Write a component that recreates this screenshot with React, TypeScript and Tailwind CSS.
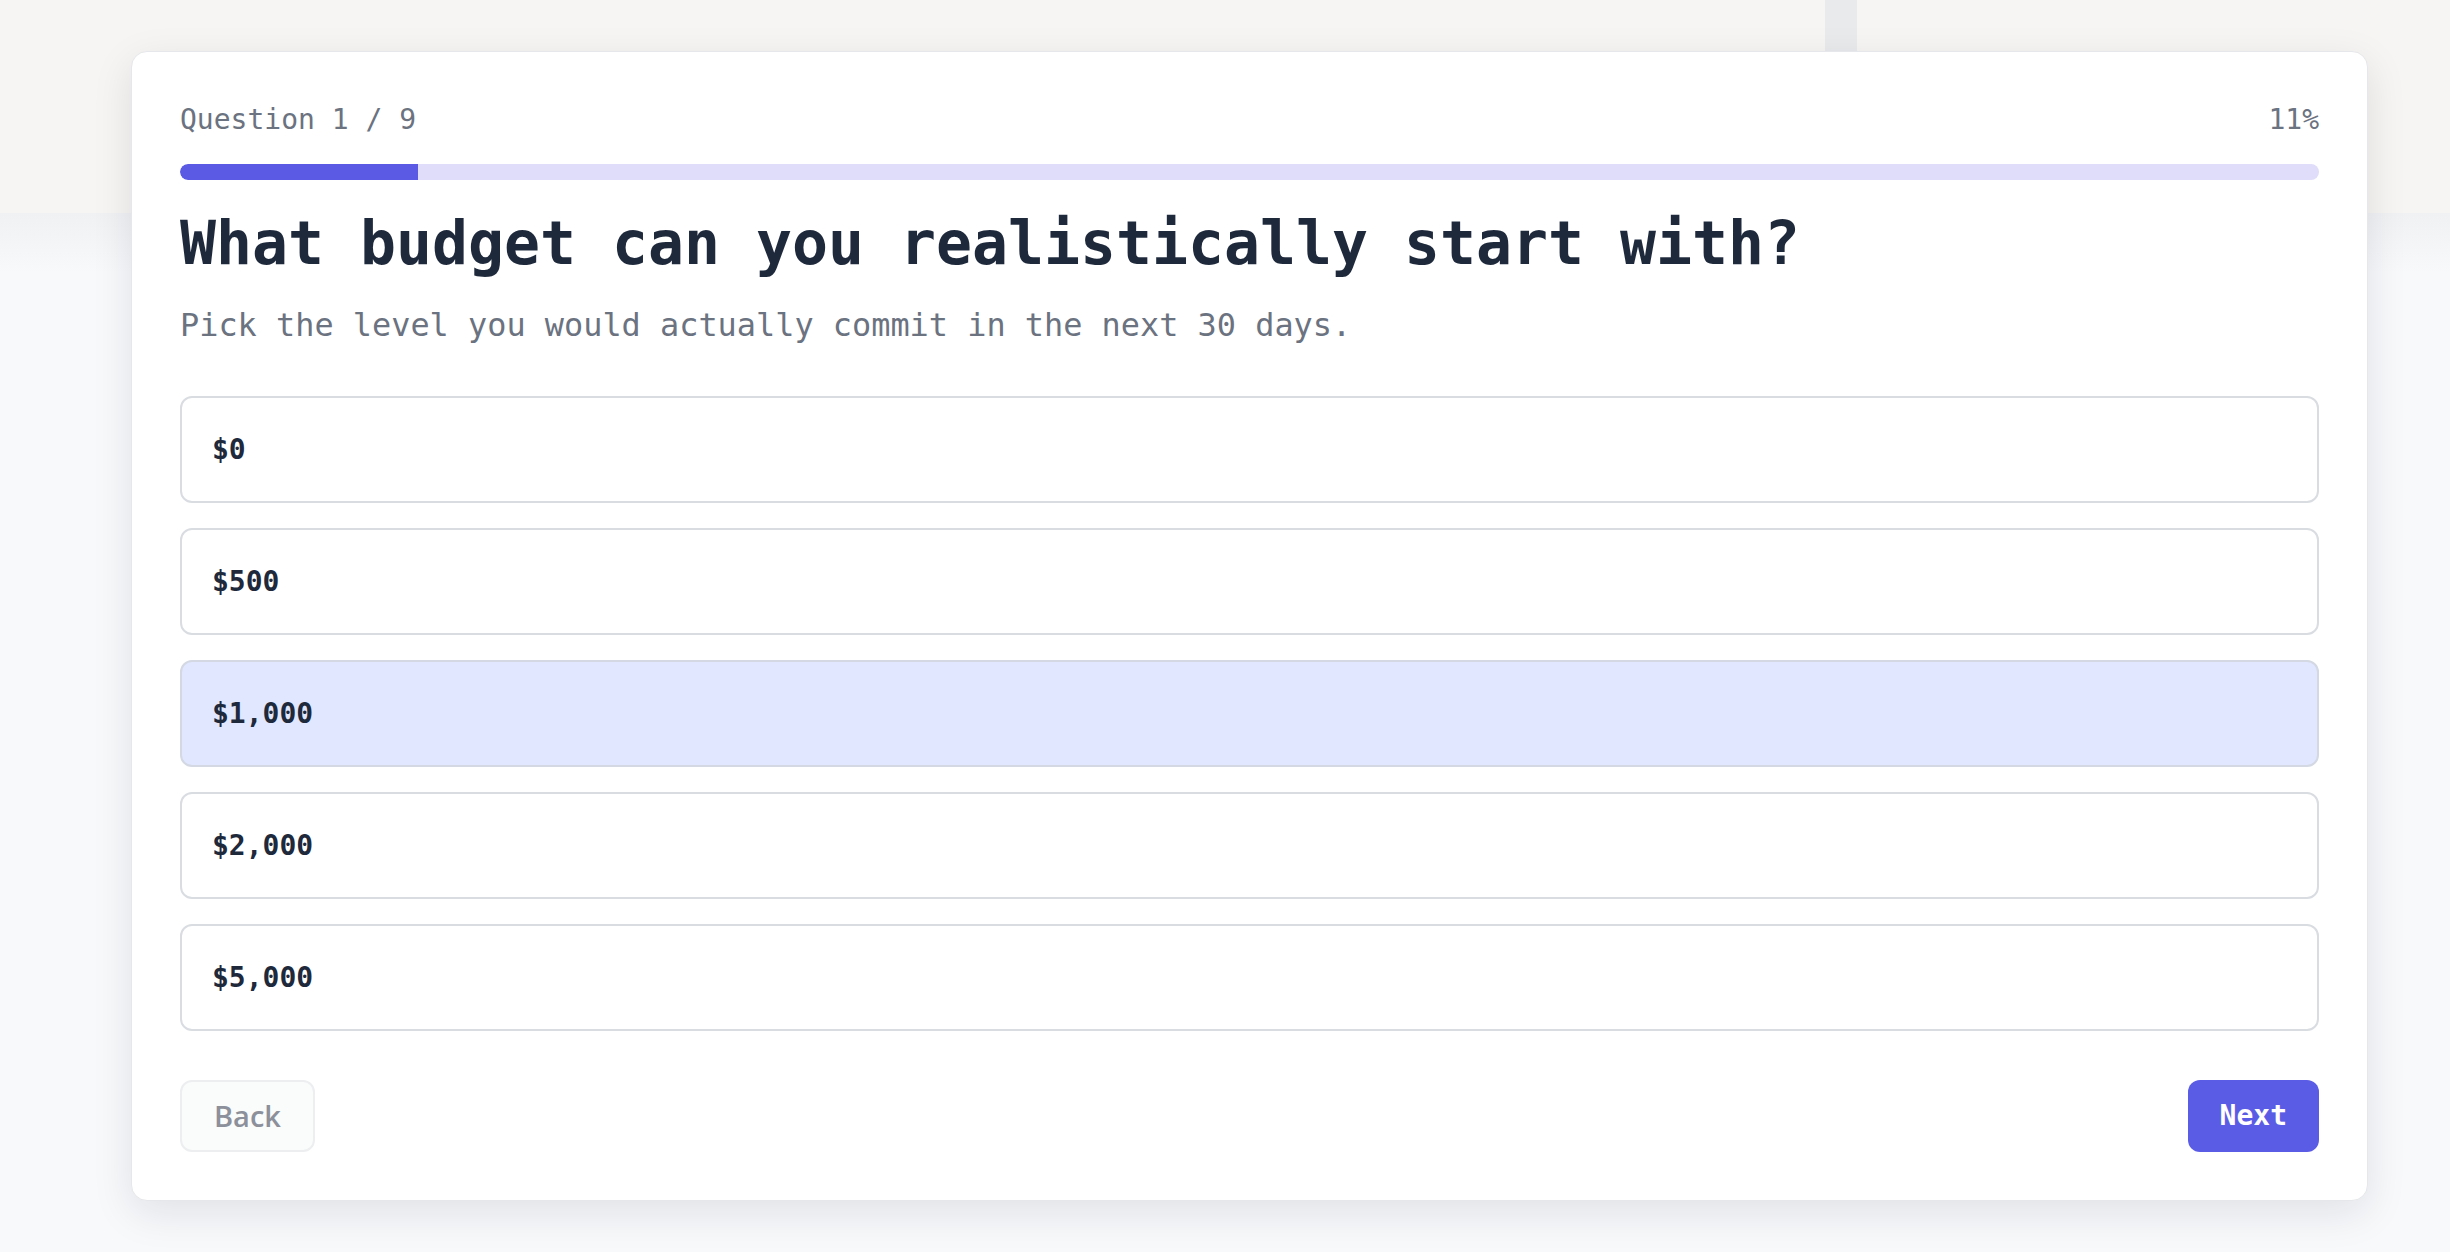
const options = ["$0", "$500", "$1,000", "$2,000", "$5,000"];

const mono = { fontFamily: '"DejaVu Sans Mono", "Liberation Mono", monospace' };

export default function App() {
	const selected = 2;
	const step = 1;
	const total = 9;
	const pct = Math.round((step / total) * 100);

	return (
		<div className="relative min-h-[1252px] w-full overflow-hidden bg-[#f8f9fb]">
			{/* blurred backdrop */}
			<div className="absolute inset-x-0 top-0 h-[213px] bg-[#f6f5f3]" />
			<div className="absolute left-[1825px] top-0 h-[213px] w-[32px] bg-[#e9eaec]" />
			<div className="absolute inset-x-0 top-[213px] h-[60px] bg-gradient-to-b from-[#f0f1f3] to-[#f8f9fb]" />

			<div className="relative pt-[51px] pb-[52px] pl-[131px]">
				<div
					className="flex w-[2237px] flex-col rounded-[16px] border border-[#e6e7ea] bg-white p-[48px] shadow-[0_12px_40px_rgba(15,23,42,0.10)]"
					style={mono}
				>
					<div className="flex h-[40px] items-center justify-between text-[28px] text-[#6b7280]">
						<span>
							Question {step} / {total}
						</span>
						<span>{pct}%</span>
					</div>

					<div className="mt-[24px] h-[16px] w-full overflow-hidden rounded-full bg-[#dfddf9]">
						<div
							className="h-full rounded-l-full bg-[#5a5ae4]"
							style={{ width: `${(step / total) * 100}%` }}
						/>
					</div>

					<h1 className="mt-[27px] text-[59.8px] font-bold leading-[72px] text-[#1e293b]">
						What budget can you realistically start with?
					</h1>
					<p className="mt-[22px] text-[31.9px] leading-[48px] text-[#6b7280]">
						Pick the level you would actually commit in the next 30 days.
					</p>

					<div className="mt-[47px] flex flex-col gap-[25px]">
						{options.map((o, i) => (
							<button
								key={o}
								type="button"
								className={
									"flex h-[107px] w-full items-center rounded-[12px] border-2 px-[30px] text-left text-[28px] font-semibold text-[#1e293b] " +
									(i === selected
										? "border-[#d3d8e2] bg-[#e0e7ff]"
										: "border-[#d9dce1] bg-white")
								}
							>
								{o}
							</button>
						))}
					</div>

					<div className="mt-[49px] flex items-center justify-between">
						<button
							type="button"
							disabled
							className="h-[72px] rounded-[12px] border-2 border-[#eceef0] bg-[#fafbfb] px-[32px] text-[29px] font-semibold text-[#8c909a]"
							style={{ fontFamily: '"Open Sans", "Noto Sans", sans-serif' }}
						>
							Back
						</button>
						<button
							type="button"
							className="h-[72px] rounded-[12px] bg-[#5b5ce6] px-[32px] text-[28px] font-bold text-white"
						>
							Next
						</button>
					</div>
				</div>
			</div>
		</div>
	);
}
